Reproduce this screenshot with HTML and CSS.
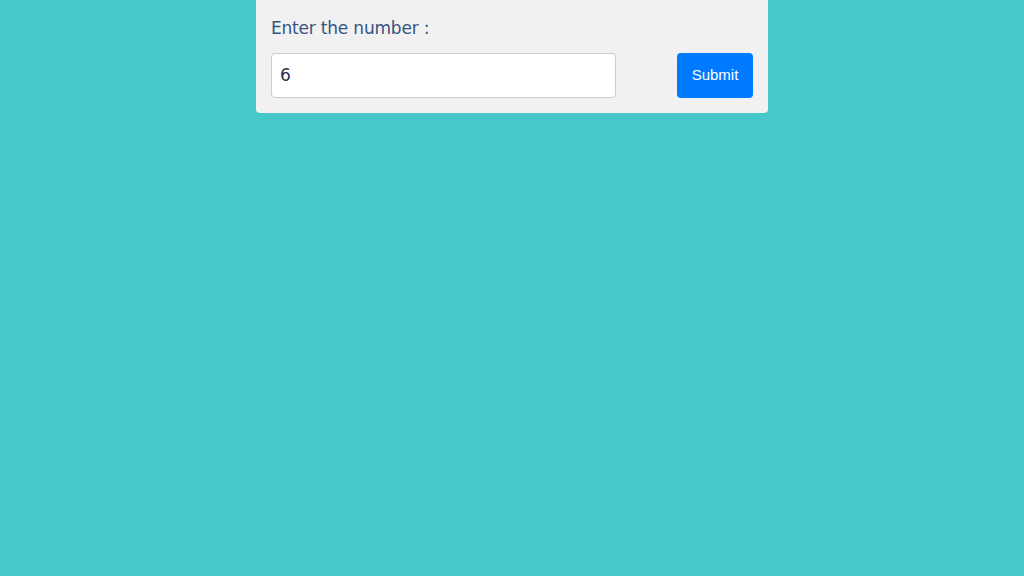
FILE: index.html
```html
<!DOCTYPE html>
<html>
<head>
<meta charset="utf-8">
<link rel="stylesheet" href="styles.css">
</head>
<body>
<div class="card">
  <label class="label" for="num">Enter the number :</label>
  <div class="row">
    <input id="num" class="field" type="text" value="6">
    <button class="btn">Submit</button>
  </div>
</div>
</body>
</html>
```
FILE: styles.css
```css
html, body {
  margin: 0;
  padding: 0;
  background: #46c7c9;
  height: 100%;
}
body {
  display: flex;
  justify-content: center;
  align-items: flex-start;
}
.card {
  width: 512px;
  box-sizing: border-box;
  background: #f1f1f1;
  border-radius: 0 0 4px 4px;
  padding: 17px 15px 15px 15px;
  display: flex;
  flex-direction: column;
  gap: 13px;
}
.label {
  font-family: "DejaVu Sans", Verdana, sans-serif;
  font-size: 17px;
  line-height: 23px;
  color: #34557f;
  letter-spacing: -0.2px;
}
.row {
  display: flex;
  justify-content: space-between;
  align-items: stretch;
}
.field {
  width: 345px;
  height: 45px;
  box-sizing: border-box;
  border: 1px solid #cccccc;
  border-radius: 4px;
  background: #fff;
  padding: 0 8px 2px 8px;
  font-family: "DejaVu Sans", Verdana, sans-serif;
  font-size: 17px;
  color: #1f2d4d;
  outline: none;
}
.btn {
  width: 76px;
  height: 45px;
  border: none;
  border-radius: 4px;
  background: #007bff;
  color: #fff;
  font-family: "Liberation Sans", Arial, sans-serif;
  font-size: 15px;
  padding: 0 0 3px 0;
}
```
